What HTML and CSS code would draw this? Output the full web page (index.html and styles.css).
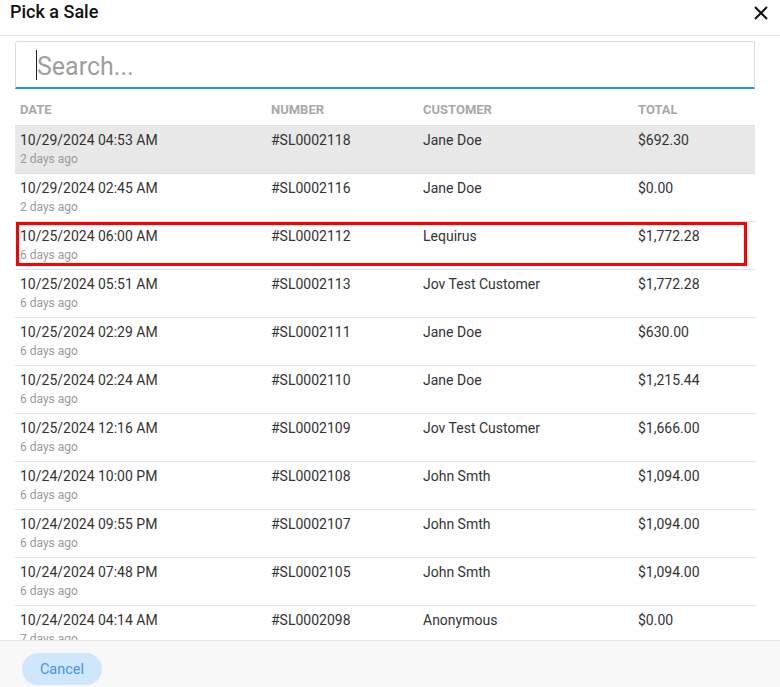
FILE: index.html
```html
<!DOCTYPE html>
<html lang="en">
<head>
<meta charset="utf-8">
<title>Pick a Sale</title>
<link rel="stylesheet" href="styles.css">
</head>
<body>
<div class="dialog">
  <div class="dialog-header">
    <h1 class="title">Pick a Sale</h1>
    <button class="close" aria-label="Close">
      <svg width="14" height="14" viewBox="0 0 14 14"><path d="M1 1 L13 13 M13 1 L1 13" stroke="#111" stroke-width="2" fill="none"/></svg>
    </button>
  </div>
  <div class="dialog-body">
    <div class="search">
      <input class="search-input" type="text" placeholder="Search...">
      <span class="caret"></span>
    </div>
    <div class="table-head">
      <div>Date</div><div>Number</div><div>Customer</div><div>Total</div>
    </div>
    <div class="rows">
      <div class="row row-hover">
        <div><div class="main">10/29/2024 04:53 AM</div><div class="sub">2 days ago</div></div>
        <div class="main">#SL0002118</div><div class="main">Jane Doe</div><div class="main">$692.30</div>
      </div>
      <div class="row">
        <div><div class="main">10/29/2024 02:45 AM</div><div class="sub">2 days ago</div></div>
        <div class="main">#SL0002116</div><div class="main">Jane Doe</div><div class="main">$0.00</div>
      </div>
      <div class="row">
        <div><div class="main">10/25/2024 06:00 AM</div><div class="sub">6 days ago</div></div>
        <div class="main">#SL0002112</div><div class="main">Lequirus</div><div class="main">$1,772.28</div>
        <span class="highlight"></span>
      </div>
      <div class="row">
        <div><div class="main">10/25/2024 05:51 AM</div><div class="sub">6 days ago</div></div>
        <div class="main">#SL0002113</div><div class="main">Jov Test Customer</div><div class="main">$1,772.28</div>
      </div>
      <div class="row">
        <div><div class="main">10/25/2024 02:29 AM</div><div class="sub">6 days ago</div></div>
        <div class="main">#SL0002111</div><div class="main">Jane Doe</div><div class="main">$630.00</div>
      </div>
      <div class="row">
        <div><div class="main">10/25/2024 02:24 AM</div><div class="sub">6 days ago</div></div>
        <div class="main">#SL0002110</div><div class="main">Jane Doe</div><div class="main">$1,215.44</div>
      </div>
      <div class="row">
        <div><div class="main">10/25/2024 12:16 AM</div><div class="sub">6 days ago</div></div>
        <div class="main">#SL0002109</div><div class="main">Jov Test Customer</div><div class="main">$1,666.00</div>
      </div>
      <div class="row">
        <div><div class="main">10/24/2024 10:00 PM</div><div class="sub">6 days ago</div></div>
        <div class="main">#SL0002108</div><div class="main">John Smth</div><div class="main">$1,094.00</div>
      </div>
      <div class="row">
        <div><div class="main">10/24/2024 09:55 PM</div><div class="sub">6 days ago</div></div>
        <div class="main">#SL0002107</div><div class="main">John Smth</div><div class="main">$1,094.00</div>
      </div>
      <div class="row">
        <div><div class="main">10/24/2024 07:48 PM</div><div class="sub">6 days ago</div></div>
        <div class="main">#SL0002105</div><div class="main">John Smth</div><div class="main">$1,094.00</div>
      </div>
      <div class="row">
        <div><div class="main">10/24/2024 04:14 AM</div><div class="sub">7 days ago</div></div>
        <div class="main">#SL0002098</div><div class="main">Anonymous</div><div class="main">$0.00</div>
      </div>
    </div>
  </div>
  <div class="dialog-footer">
    <button class="cancel">Cancel</button>
  </div>
</div>
</body>
</html>
```
FILE: styles.css
```css
html, body {
  margin: 0;
  padding: 0;
  background: #fff;
  font-family: Roboto, "Liberation Sans", Arial, sans-serif;
}
.dialog {
  width: 780px;
  height: 687px;
  display: flex;
  flex-direction: column;
  overflow: hidden;
}
.dialog-header {
  height: 35px;
  border-bottom: 1px solid #e6e6e6;
  display: flex;
  justify-content: space-between;
  align-items: flex-start;
  padding: 0 12px 0 10px;
  flex-shrink: 0;
}
.title {
  margin: 0;
  font-size: 18px;
  font-weight: 500;
  line-height: 24px;
  color: #111;
}
.close {
  border: 0;
  background: none;
  padding: 0;
  margin-top: 6px;
  width: 14px;
  height: 14px;
  display: flex;
}
.dialog-body {
  flex: 1;
  overflow: hidden;
  padding: 5px 25px 0 15px;
}
.search {
  position: relative;
  height: 48px;
}
.search-input {
  box-sizing: border-box;
  width: 100%;
  height: 48px;
  margin: 0;
  border: 1px solid #dcdcdc;
  border-bottom: 2px solid #2196f3;
  border-radius: 3px 3px 0 0;
  padding: 3px 0 0 21px;
  font-family: inherit;
  font-size: 25px;
  color: #333;
  outline: none;
}
.search-input::placeholder {
  color: #9e9e9e;
}
.caret {
  position: absolute;
  left: 21px;
  top: 9px;
  width: 1px;
  height: 30px;
  background: #222;
}
.table-head {
  display: grid;
  grid-template-columns: 251px 152px 215px 1fr;
  padding: 13px 5px 7px;
  font-size: 13px;
  font-weight: 700;
  line-height: 16px;
  text-transform: uppercase;
  color: #a8a8a8;
}
.row {
  position: relative;
  display: grid;
  grid-template-columns: 251px 152px 215px 1fr;
  padding: 4px 5px 6px;
  border-top: 1px solid #e0e0e0;
  align-items: start;
}
.row-hover {
  background: #e8e8e8;
}
.main {
  font-size: 14px;
  line-height: 20px;
  color: #333;
}
.sub {
  font-size: 12px;
  line-height: 16px;
  padding-top: 1px;
  color: #9a9a9a;
}
.highlight {
  position: absolute;
  left: 1px;
  top: 0;
  width: 731px;
  height: 44px;
  box-sizing: border-box;
  border: 3px solid #ff0000;
  pointer-events: none;
}
.dialog-footer {
  flex-shrink: 0;
  height: 34px;
  border-top: 1px solid #e6e6e6;
  background: #f8f8f8;
  padding: 12px 0 0 22px;
}
.cancel {
  width: 80px;
  height: 32px;
  border: 0;
  border-radius: 16px;
  background: #cfe7fc;
  color: #4a93e4;
  font-family: inherit;
  font-size: 14.5px;
  padding: 0;
}
```
